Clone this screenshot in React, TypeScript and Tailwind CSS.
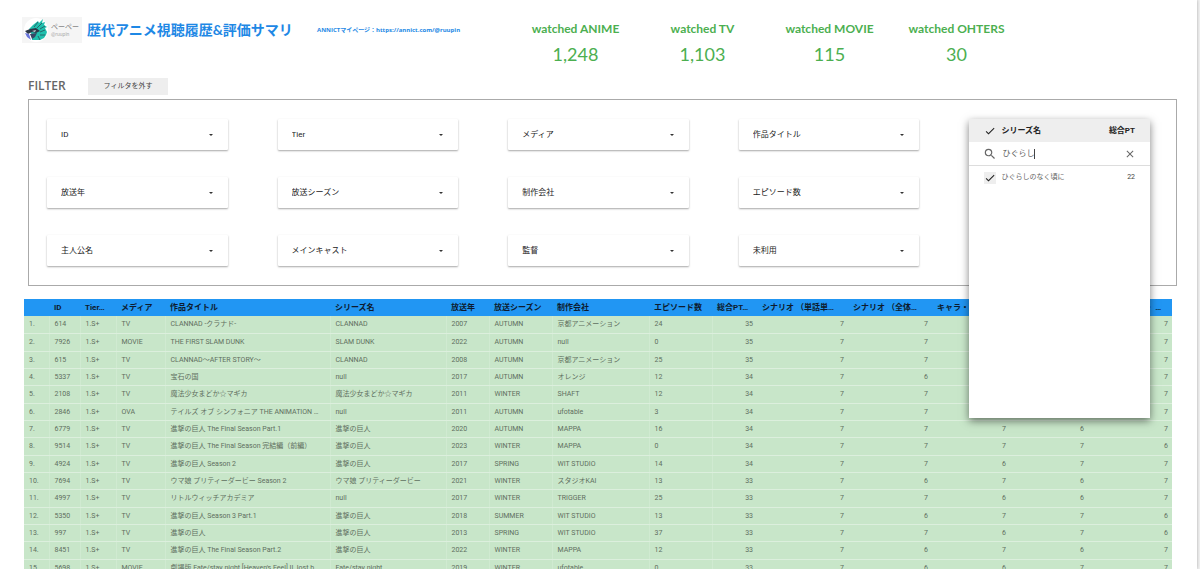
import { useState } from 'react';
import { MdCheck, MdClose, MdSearch } from 'react-icons/md';

const STATS = [
  { label: 'watched ANIME', value: '1,248' },
  { label: 'watched TV', value: '1,103' },
  { label: 'watched MOVIE', value: '115' },
  { label: 'watched OHTERS', value: '30' },
];

// One array per column of the filter panel
const FILTER_COLUMNS = [
  ['ID', '放送年', '主人公名'],
  ['Tier', '放送シーズン', 'メインキャスト'],
  ['メディア', '制作会社', '監督'],
  ['作品タイトル', 'エピソード数', '未利用'],
];

const COLUMNS = [
  { label: '', width: 'w-[25px]' },
  { label: 'ID', width: 'w-[31px]' },
  { label: 'Tier…', width: 'w-[36px]' },
  { label: 'メディア', width: 'w-[49px]' },
  { label: '作品タイトル', width: 'w-[165px]' },
  { label: 'シリーズ名', width: 'w-[116px]' },
  { label: '放送年', width: 'w-[43px]' },
  { label: '放送シーズン', width: 'w-[63px]' },
  { label: '制作会社', width: 'w-[97px]' },
  { label: 'エピソード数', width: 'w-[63px]' },
  { label: '総合PT…', width: 'w-[45px]' },
  { label: 'シナリオ （単話単…', width: 'w-[91px]' },
  { label: 'シナリオ （全体…', width: 'w-[84px]' },
  { label: 'キャラ・声優…', width: 'w-[78px]' },
  { label: '作画・演出…', width: 'w-[78px]' },
  { label: '音楽・OP・ED・ …', width: 'w-[84px]' },
];

type Row = [string, string, string, string, string, string, string, string, number[]];

const ROWS: Row[] = [
  ['614', 'TV', 'CLANNAD -クラナド-', 'CLANNAD', '2007', 'AUTUMN', '京都アニメーション', '24', [35, 7, 7, 7, 7, 7]],
  ['7926', 'MOVIE', 'THE FIRST SLAM DUNK', 'SLAM DUNK', '2022', 'AUTUMN', 'null', '0', [35, 7, 7, 7, 7, 7]],
  ['615', 'TV', 'CLANNAD〜AFTER STORY〜', 'CLANNAD', '2008', 'AUTUMN', '京都アニメーション', '25', [35, 7, 7, 7, 7, 7]],
  ['5337', 'TV', '宝石の国', 'null', '2017', 'AUTUMN', 'オレンジ', '12', [34, 7, 6, 7, 7, 7]],
  ['2108', 'TV', '魔法少女まどか☆マギカ', '魔法少女まどか☆マギカ', '2011', 'WINTER', 'SHAFT', '12', [34, 7, 7, 7, 6, 7]],
  ['2846', 'OVA', 'テイルズ オブ シンフォニア THE ANIMATION …', 'null', '2011', 'AUTUMN', 'ufotable', '3', [34, 7, 7, 7, 6, 7]],
  ['6779', 'TV', '進撃の巨人 The Final Season Part.1', '進撃の巨人', '2020', 'AUTUMN', 'MAPPA', '16', [34, 7, 7, 7, 6, 7]],
  ['9514', 'TV', '進撃の巨人 The Final Season 完結編（前編）', '進撃の巨人', '2023', 'WINTER', 'MAPPA', '0', [34, 7, 7, 7, 7, 6]],
  ['4924', 'TV', '進撃の巨人 Season 2', '進撃の巨人', '2017', 'SPRING', 'WIT STUDIO', '14', [34, 7, 7, 6, 7, 7]],
  ['7694', 'TV', 'ウマ娘 プリティーダービー Season 2', 'ウマ娘 プリティーダービー', '2021', 'WINTER', 'スタジオKAI', '13', [33, 7, 6, 7, 6, 7]],
  ['4997', 'TV', 'リトルウィッチアカデミア', 'null', '2017', 'WINTER', 'TRIGGER', '25', [33, 7, 7, 6, 6, 7]],
  ['5350', 'TV', '進撃の巨人 Season 3 Part.1', '進撃の巨人', '2018', 'SUMMER', 'WIT STUDIO', '13', [33, 7, 6, 7, 7, 6]],
  ['997', 'TV', '進撃の巨人', '進撃の巨人', '2013', 'SPRING', 'WIT STUDIO', '37', [33, 7, 7, 6, 7, 6]],
  ['8451', 'TV', '進撃の巨人 The Final Season Part.2', '進撃の巨人', '2022', 'WINTER', 'MAPPA', '12', [33, 7, 6, 7, 6, 7]],
  ['5698', 'MOVIE', "劇場版 Fate/stay night [Heaven's Feel] II. lost b", 'Fate/stay night', '2019', 'WINTER', 'ufotable', '0', [33, 7, 6, 6, 7, 7]],
];

function Logo() {
  return (
    <div className="flex h-[26px] w-[60px] shrink-0 items-center gap-[3px] bg-[#f5f5f5] pl-[2px]">
      <svg viewBox="0 0 24 24" className="size-6 shrink-0" aria-hidden="true">
        <circle cx="12" cy="12" r="12" fill="#fff" />
        <path d="M5 11 L9 7 L14 3 L15 5 L19 1 L18 5 L21 4 L20 7 L23 9 L21 10 L23 14 L22 17 L20 20 L16 22 L12 22 L8 22 L8 17Z" fill="#1fc0ae" />
        <path d="M14 4 L10 9 M18 5 L13 10 M21 8 L16 11 M21 12 L16 14 M21 17 L16 17 M16 22 L14 18" stroke="#27666a" strokeWidth="1" fill="none" />
        <path d="M1 13 L6 11 L12 10 L16 13 L12 15 L8 14 L4 16Z" fill="#2c3848" />
        <path d="M1 15 L5 16 L7 22 L3 19Z" fill="#6976dc" />
        <path d="M6 16 L13 15 L11 19 L8 21Z" fill="#354765" />
        <path d="M8 13 L12 12 L11 14Z" fill="#c9d6dc" />
      </svg>
      <div className="flex flex-col text-[7px] leading-[8px] text-[#888]">
        <span>ペーペー</span>
        <span className="text-[5px] text-[#aaa]">@ruupin</span>
      </div>
    </div>
  );
}

function FilterSelect({ label }: { label: string }) {
  return (
    <div className="relative">
      <select
        aria-label={label}
        className="block h-[31px] w-full appearance-none rounded-[1px] bg-white px-[14px] text-[8px] text-[#222] shadow-[0_1px_2px_rgba(0,0,0,0.35)]"
      >
        <option>{label}</option>
      </select>
      <svg viewBox="0 0 4 2" className="pointer-events-none absolute top-[15px] right-[15px] h-[2px] w-1" aria-hidden="true">
        <path d="M0 0H4L2 2Z" fill="#333" />
      </svg>
    </div>
  );
}

function SeriesMenu() {
  const [query, setQuery] = useState('ひぐらし');

  return (
    <div className="absolute inset-x-0 top-0 z-10 h-[299px] bg-white shadow-[0_3px_8px_rgba(0,0,0,0.5)]">
      <div className="flex h-[23px] items-center bg-[#eee] px-[15px] text-[8px] font-bold text-[#222]">
        <MdCheck className="mr-[5px] size-3" />
        <span className="flex-1">シリーズ名</span>
        <span>総合PT</span>
      </div>
      <div className="flex h-6 items-center justify-between border-b border-[#ddd] px-[14px] text-[#666]">
        <div className="flex items-center">
          <MdSearch className="mr-[5px] size-[14px]" />
          <input
            aria-label="シリーズ名を検索"
            className="field-sizing-content h-[10px] max-w-[90px] border-r border-[#444] text-[8px] leading-[10px] caret-transparent outline-none"
            value={query}
            onChange={e => setQuery(e.target.value)}
          />
        </div>
        <button type="button" aria-label="クリア" onClick={() => setQuery('')}>
          <MdClose className="size-3" />
        </button>
      </div>
      <label className="flex h-[23px] items-center px-[15px] text-[7px] text-[#666]">
        <span className="relative mr-[5px] size-3 bg-[#eee]">
          <input type="checkbox" defaultChecked className="peer block size-full appearance-none" />
          <MdCheck className="pointer-events-none absolute inset-0 hidden size-3 text-[#222] peer-checked:block" />
        </span>
        <span className="flex-1">ひぐらしのなく頃に</span>
        <span className="text-[#444]">22</span>
      </label>
    </div>
  );
}

function AnimeTable() {
  return (
    <table className="w-full table-fixed border-collapse text-left">
      <colgroup>
        {COLUMNS.map((c, i) => (
          <col key={i} className={c.width} />
        ))}
      </colgroup>
      <thead>
        <tr className="h-[17px] bg-[#2196f3]">
          {COLUMNS.map((c, i) => (
            <th key={i} className="p-0 pl-[5px] text-[8px] leading-4 font-bold whitespace-nowrap text-[#0d1b2e]">
              {c.label}
            </th>
          ))}
        </tr>
      </thead>
      <tbody>
        {ROWS.map(([id, media, title, series, year, season, studio, episodes, scores], i) => (
          <tr key={id} className="h-[17px] bg-[#c8e6c9] nth-[3n+2]:h-[18px]">
            {[`${i + 1}.`, id, '1.S+', media, title, series, year, season, studio, episodes].map((text, j) => (
              <td key={j} className="truncate border-r border-b border-r-[#d0ead1] border-b-[#dcefdd] p-0 pl-[5px] text-[7px] leading-4 text-[#5f6f60]">
                {text}
              </td>
            ))}
            {scores.map((score, j) => (
              <td key={j} className="border-b border-b-[#dcefdd] p-0 pr-1 text-right text-[7px] leading-4 text-[#5f6f60]">
                {score}
              </td>
            ))}
          </tr>
        ))}
      </tbody>
    </table>
  );
}

export default function App() {
  return (
    <div className="h-screen overflow-hidden bg-[#f1f1f1] pr-[3px] font-['Roboto','Noto_Sans_CJK_JP',sans-serif]">
      <main className="h-full overflow-hidden bg-white shadow-[0_0_3px_rgba(0,0,0,0.3)]">
        <header className="flex h-[77px] items-start pl-[22px] font-['Lato','Noto_Sans_CJK_JP',sans-serif]">
          <div className="flex w-[490px] shrink-0 items-center pt-[17px]">
            <Logo />
            <h1 className="ml-[5px] w-[230px] text-[14px] leading-6 font-bold whitespace-nowrap text-[#1e88e5]">歴代アニメ視聴履歴&amp;評価サマリ</h1>
            <a
              href="https://annict.com/@ruupin"
              className="font-['Open_Sans','Noto_Sans_CJK_JP',sans-serif] text-[6px] leading-3 font-bold whitespace-nowrap text-[#1e88e5]"
            >
              ANNICTマイページ：https://annict.com/@ruupin
            </a>
          </div>
          <dl className="grid max-w-[508px] flex-1 grid-cols-4 pt-[21px] text-center text-[#4caf50]">
            {STATS.map(s => (
              <div key={s.label}>
                <dt className="text-[12px] leading-4 font-bold">{s.label}</dt>
                <dd className="pt-[5px] text-[18px] leading-6">{s.value}</dd>
              </div>
            ))}
          </dl>
        </header>

        <div className="flex h-[22px] items-start gap-5 pl-[28px]">
          <h2 className="w-10 font-['Open_Sans',sans-serif] text-[12px] leading-[18px] font-semibold text-[#666]">FILTER</h2>
          <button type="button" className="mt-px h-[17px] w-20 bg-[#eee] text-[7px] text-[#444]">
            フィルタを外す
          </button>
        </div>

        <section className="mr-[20px] ml-[28px] grid h-[187px] grid-cols-5 gap-[50px] border border-[#aaa] pt-[19px] pr-[26px] pl-[18px]">
          {FILTER_COLUMNS.map(labels => (
            <div key={labels[0]} className="flex flex-col gap-[27px]">
              {labels.map(label => (
                <FilterSelect key={label} label={label} />
              ))}
            </div>
          ))}
          <div className="relative">
            <SeriesMenu />
          </div>
        </section>

        <div className="pt-[13px] pr-[25px] pl-6">
          <AnimeTable />
        </div>
      </main>
    </div>
  );
}
